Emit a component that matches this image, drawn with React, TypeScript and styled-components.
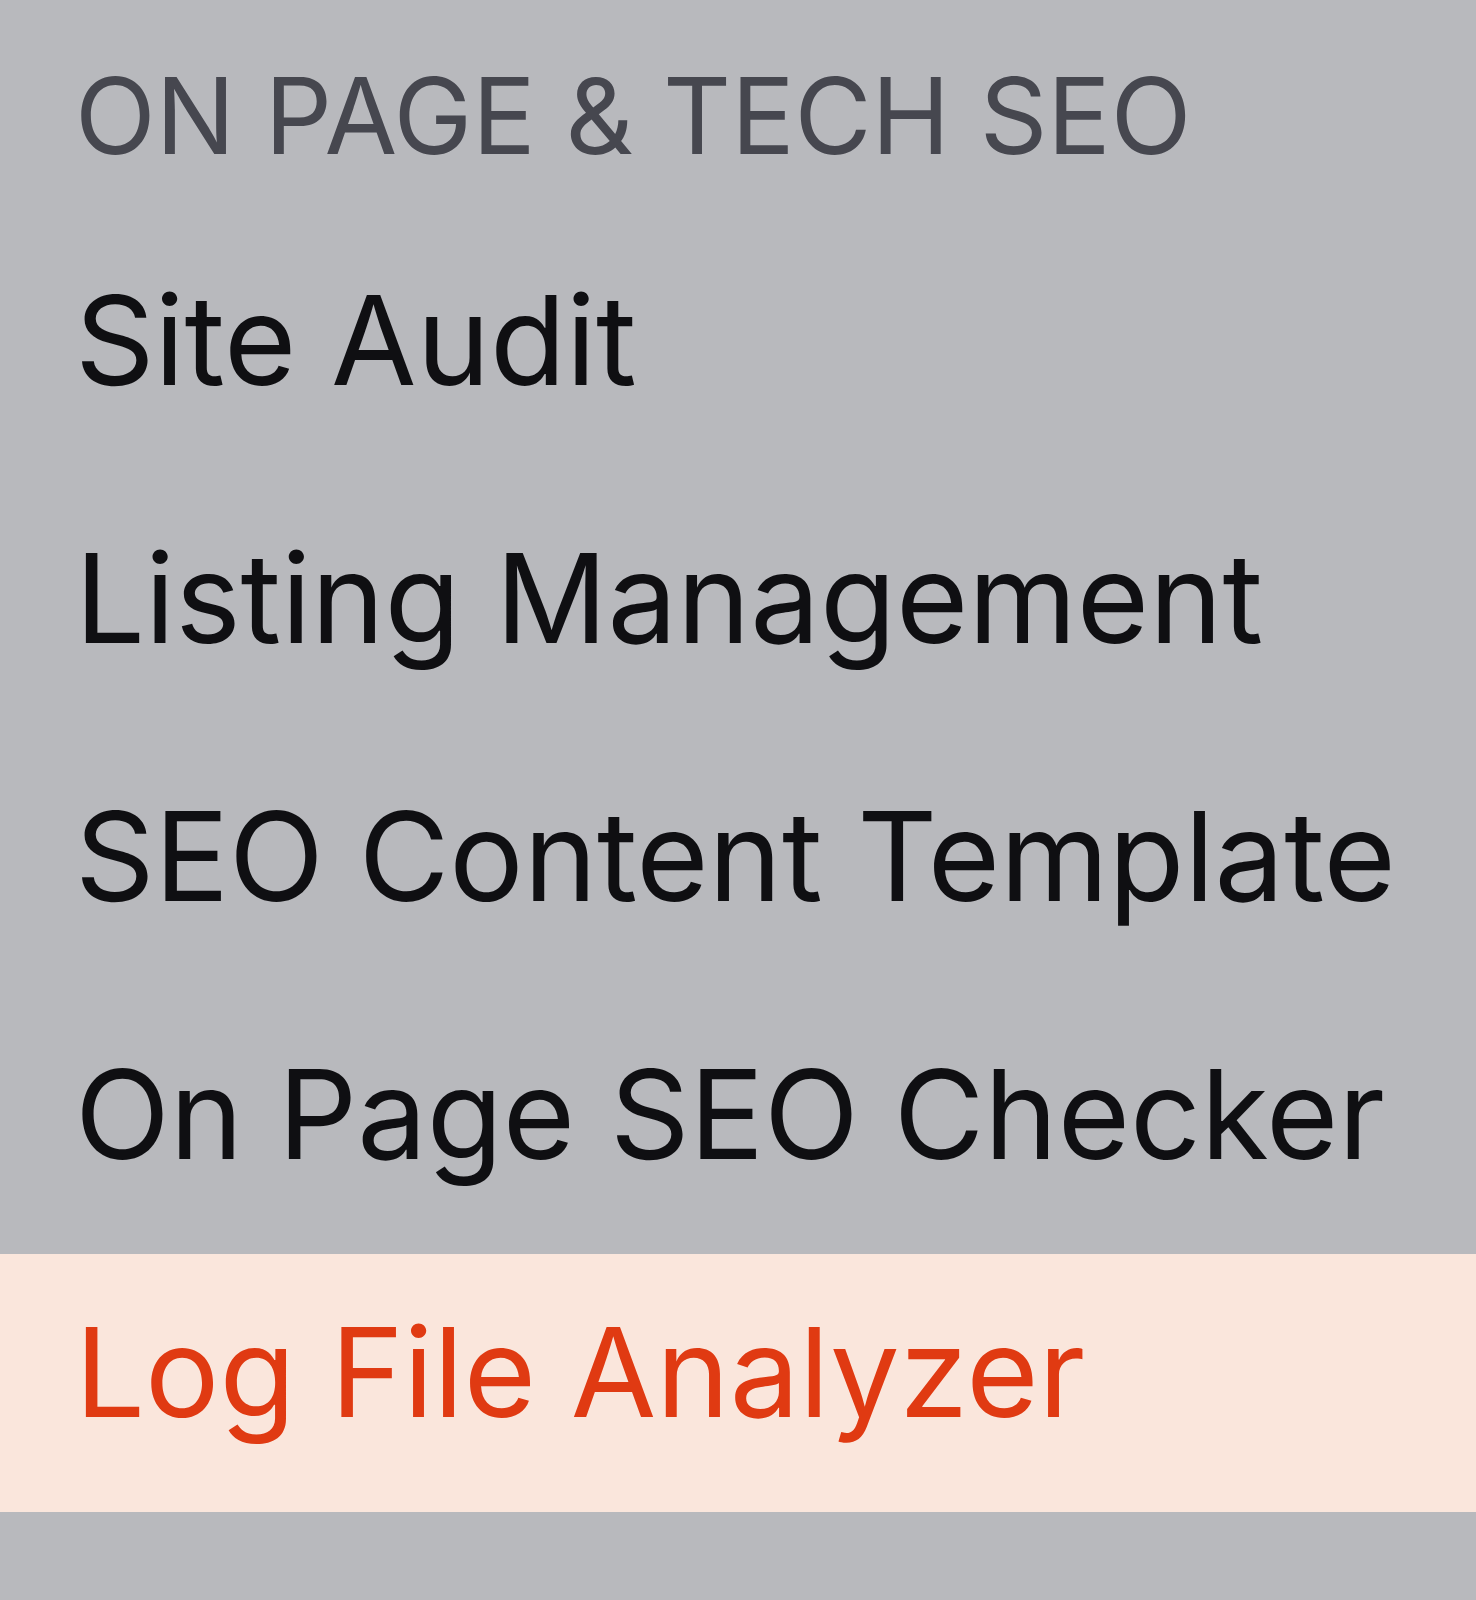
import React from "react";
import styled, { createGlobalStyle } from "styled-components";

const GlobalStyle = createGlobalStyle`
    html, body {
        margin: 0;
        padding: 0;
        background: #b8b9bd;
    }
    body {
        font-family: Inter, "Noto Sans", "Liberation Sans", sans-serif;
        -webkit-font-smoothing: antialiased;
    }
`;

const items = [
    "Site Audit",
    "Listing Management",
    "SEO Content Template",
    "On Page SEO Checker",
    "Log File Analyzer",
];

export default function App() {
    const activeItem = "Log File Analyzer";

    return (
        <Menu>
            <GlobalStyle />
            <SectionTitle>ON PAGE &amp; TECH SEO</SectionTitle>
            <List>
                {items.map((name) => (
                    <Item key={name} $active={name === activeItem}>
                        {name}
                    </Item>
                ))}
            </List>
        </Menu>
    );
}

const Menu = styled.nav`
    width: 1476px;
    height: 1600px;
    background-color: #b8b9bd;
    box-sizing: border-box;
`;

const SectionTitle = styled.h2`
    margin: 0;
    height: 222px;
    box-sizing: border-box;
    padding: 53px 0 0 75px;
    font-size: 105.5px;
    line-height: 1.2;
    font-weight: 400;
    color: #46474f;
    white-space: nowrap;
`;

const List = styled.ul`
    list-style: none;
    margin: 0;
    padding: 0;
`;

const Item = styled.li<{ $active?: boolean }>`
    height: 258px;
    box-sizing: border-box;
    display: flex;
    align-items: center;
    padding: 0 0 22px 75px;
    font-size: 124px;
    line-height: 1.2;
    font-weight: 400;
    white-space: nowrap;
    color: ${(p) => (p.$active ? "#e03a12" : "#0f0f12")};
    background-color: ${(p) => (p.$active ? "#fae6dc" : "transparent")};
`;
